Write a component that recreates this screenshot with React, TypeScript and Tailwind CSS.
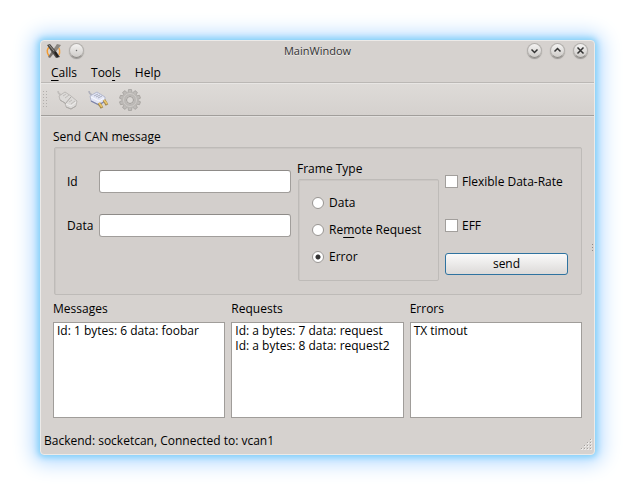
import { useState, type ReactNode } from "react";

const GROUP = "rounded-[2px] border border-[#bebbb8] bg-[#d3cfcc] shadow-[inset_1px_1px_0_#cac6c3]";

function Mnemonic({ children }: { children: ReactNode }) {
  return <span className="underline decoration-1 underline-offset-[3px]">{children}</span>;
}

function TitleButton({ label, children }: { label: string; children: ReactNode }) {
  return (
    <button
      type="button"
      aria-label={label}
      className="flex size-[15px] items-center justify-center rounded-full border border-[#b2afac] border-b-[#8b8885] bg-linear-to-b from-[#f4f3f2] to-[#cfccc9] shadow-[0_1px_1px_#989592]"
    >
      <svg viewBox="0 0 13 13" className="size-[13px] shrink-0" fill="none" stroke="#333" strokeWidth="1.5">
        {children}
      </svg>
    </button>
  );
}

function AppIcon() {
  return (
    <svg viewBox="0 0 16 16" className="size-4" fill="none">
      <path d="M4 4C1 5 0 9 3 13" stroke="#f59a2c" strokeWidth="1.5" />
      <path d="M12 4c2 2 2 5 1 8" stroke="#f3a649" strokeWidth="1.5" />
      <path d="M2 14 6 8l3 1-5 6z" fill="#77716b" />
      <path d="M7 7 11 1l4 1L9 10z" fill="#8b8780" />
      <path d="M1 2 4 1l5 6 5 7-4 1-5-7z" fill="#4c4945" />
      <path d="m3 2 5 6" stroke="#9b9791" />
      <path d="m9 9 3 5" stroke="#24211f" strokeWidth="2" />
    </svg>
  );
}

function DisconnectIcon() {
  return (
    <svg viewBox="0 0 22 22" className="size-[22px]" fill="none" strokeLinejoin="round">
      <path d="M1 2c0 2 1 3 3 4" stroke="#c0bdba" strokeWidth="1.5" />
      <path d="m2 7 6-4 6 4 6 5-1 5-5 3-5-2-1-4-5-3z" fill="#dcdad8" stroke="#bbb8b5" />
      <path d="m8 15 6-7" stroke="#aaa7a4" />
      <path d="m3 11 5 3m1 4 5 2 5-3" stroke="#aeaba8" />
      <path d="m9 15 5 2 5-4" stroke="#eeedec" />
      <path d="m6 7 3-2m-1 4 4-3m0 7 3-2m-1 4 4-3" stroke="#bfbcb9" />
    </svg>
  );
}

function ConnectIcon() {
  return (
    <svg viewBox="0 0 22 22" className="size-[22px]" fill="none" strokeLinejoin="round">
      <path d="M1 2c0 2 1 3 3 4" stroke="#b0b1bb" strokeWidth="1.5" />
      <path d="m2 7 7-4 8 5v4l-6 4-8-4z" fill="#e2e5f5" stroke="#b4b8cc" />
      <path d="m3 12 8 4 6-4" stroke="#7c82a8" strokeWidth="1.3" />
      <path d="m3 8 8 4 5-3" stroke="#fafbff" />
      <path d="m6 7 4-2m-2 3 4-2m-2 3 4-2" stroke="#a9adbd" />
      <path d="m11 14 3 5m2-8 3 5" stroke="#a08446" strokeWidth="3" />
      <path d="m11 14 3 4m2-7 3 4" stroke="#e8c46a" strokeWidth="1.8" />
    </svg>
  );
}

const TEETH = [0, 36, 72, 108, 144, 180, 216, 252, 288, 324];

function GearIcon() {
  return (
    <svg viewBox="0 0 22 22" className="size-[22px]" fill="none">
      {TEETH.map((a) => (
        <path key={a} d="m9 4 .5-3.500h3l.5 3.500z" fill="#bebbb8" stroke="#a5a29f" strokeWidth=".8" transform={`rotate(${a} 11 11)`} />
      ))}
      <circle cx="11" cy="11" r="6" stroke="#bbb8b5" strokeWidth="4" />
      <circle cx="11" cy="11" r="6.5" stroke="#cecbc8" />
      <circle cx="11" cy="11" r="3.500" fill="#dad7d4" stroke="#9f9c99" />
    </svg>
  );
}

function ToolButton({ label, children }: { label: string; children: ReactNode }) {
  return (
    <button type="button" aria-label={label} className="flex size-[22px] items-center justify-center">
      {children}
    </button>
  );
}

function TextField({ id, label }: { id: string; label: string }) {
  return (
    <div className="flex h-[23px] items-center">
      <label htmlFor={id} className="w-8 shrink-0">
        {label}
      </label>
      <input
        id={id}
        type="text"
        className="h-[23px] w-full min-w-0 rounded-[3px] border border-[#a19e9b] border-t-[#8e8b88] bg-white px-1 outline-none"
      />
    </div>
  );
}

function CheckField({ id, label }: { id: string; label: string }) {
  return (
    <div className="flex h-[23px] items-center gap-1">
      <input
        id={id}
        type="checkbox"
        className="size-[13px] shrink-0 appearance-none border border-[#a29f9c] bg-white checked:bg-[#444]"
      />
      <label htmlFor={id} className="whitespace-nowrap">
        {label}
      </label>
    </div>
  );
}

function LogList({ title, items }: { title: string; items: string[] }) {
  return (
    <section className="min-w-0">
      <h2>{title}</h2>
      <ul className="mt-[5px] h-24 overflow-hidden border border-[#a09d9a] bg-white px-[3px] leading-[15px] whitespace-nowrap">
        {items.map((item) => (
          <li key={item}>{item}</li>
        ))}
      </ul>
    </section>
  );
}

const FRAME_TYPES: { id: string; label: ReactNode }[] = [
  { id: "data", label: "Data" },
  { id: "remote", label: <>Re<Mnemonic>m</Mnemonic>ote Request</> },
  { id: "error", label: "Error" },
];

const GRIP = [
  [10, 1], [7, 4], [10, 4], [4, 7], [7, 7], [10, 7], [1, 10], [4, 10], [7, 10], [10, 10],
];

export default function App() {
  const [frame, setFrame] = useState("error");
  return (
    <div className="bg-white p-10 font-['Open_Sans','Noto_Sans',sans-serif] text-[12px] leading-4 text-black">
      <main className="relative rounded-[4px] border border-[#eceae8] bg-[#d6d2cf] shadow-[0_0_6px_2px_#7fd0f8,0_1px_20px_7px_#b4d9ff]">
        <header className="grid h-[22px] grid-cols-[1fr_auto_1fr] items-start px-[5px] pt-[2px]">
          <div className="flex gap-[7px]">
            <AppIcon />
            <TitleButton label="On all desktops">
              <circle cx="6.5" cy="6.5" r=".3" strokeWidth=".8" />
            </TitleButton>
          </div>
          <h1 className="text-[11px] text-[#333] [text-shadow:0_1px_0_#eeecea]">MainWindow</h1>
          <div className="flex justify-end gap-2 pr-px">
            <TitleButton label="Minimize">
              <path d="m3.500 5.500 3 3 3-3" />
            </TitleButton>
            <TitleButton label="Maximize">
              <path d="m3.500 7.500 3-3 3 3" />
            </TitleButton>
            <TitleButton label="Close">
              <path d="m3.500 3.500 6 6m0-6-6 6" />
            </TitleButton>
          </div>
        </header>

        <nav className="flex h-[19px] gap-[14px] px-[10px]">
          <button type="button"><Mnemonic>C</Mnemonic>alls</button>
          <button type="button">Too<Mnemonic>l</Mnemonic>s</button>
          <button type="button">Help</button>
        </nav>

        <div className="flex h-[34px] items-center gap-[9px] border-y border-t-[#bbb8b5] border-b-[#a19e9b] bg-linear-to-b from-[#dedbd8] to-[#d5d1ce] px-[2px] pt-[2px] shadow-[inset_0_1px_0_#e8e6e4,0_1px_0_#e2e0de]">
          <svg viewBox="0 0 5 18" className="h-[18px] w-[5px]" fill="#b2afac">
            {[0, 3, 6, 9, 12, 15].map((y) => (
              <path key={y} d={`M0 ${y}h1v1H0zM3 ${y}h1v1H3z`} />
            ))}
          </svg>
          <ToolButton label="Disconnect"><DisconnectIcon /></ToolButton>
          <ToolButton label="Connect"><ConnectIcon /></ToolButton>
          <ToolButton label="Configure"><GearIcon /></ToolButton>
        </div>

        <div className="px-3 pt-[13px]">
          <h2>Send CAN message</h2>
          <form
            className={`mt-[2px] ml-px flex items-start gap-[6px] pr-[13px] pb-[13px] pl-3 ${GROUP}`}
            onSubmit={(e) => e.preventDefault()}
          >
            <div className="flex min-w-0 flex-1 flex-col gap-[21px] pt-[22px]">
              <TextField id="can-id" label="Id" />
              <TextField id="can-data" label="Data" />
            </div>

            <div className="w-[142px] shrink-0 pt-[13px]" role="radiogroup" aria-labelledby="frame-type">
              <div id="frame-type">Frame Type</div>
              <div className={`mt-[2px] ml-px flex h-[102px] flex-col gap-[11px] px-[13px] pt-[15px] ${GROUP}`}>
                {FRAME_TYPES.map((type) => (
                  <div key={type.id} className="flex h-4 items-center gap-[5px]">
                    <input
                      id={type.id}
                      type="radio"
                      name="frame"
                      checked={frame === type.id}
                      onChange={() => setFrame(type.id)}
                      className="size-3 shrink-0 appearance-none rounded-full border border-[#989592] bg-white checked:bg-[radial-gradient(circle,#333_0_2px,#fff_3px)]"
                    />
                    <label htmlFor={type.id} className="whitespace-nowrap">{type.label}</label>
                  </div>
                ))}
              </div>
            </div>

            <div className="w-[123px] shrink-0 pt-[22px]">
              <div className="flex flex-col gap-[21px]">
                <CheckField id="fd" label="Flexible Data-Rate" />
                <CheckField id="eff" label="EFF" />
              </div>
              <button
                type="submit"
                className="mt-4 h-[22px] w-full rounded-[3px] border border-[#2f73a0] bg-linear-to-b from-[#fafafa] to-[#dcdad8] leading-4"
              >
                send
              </button>
            </div>
          </form>

          <div className="mt-[6px] grid grid-cols-3 gap-[6px]">
            <LogList title="Messages" items={["Id: 1 bytes: 6 data: foobar"]} />
            <LogList title="Requests" items={["Id: a bytes: 7 data: request", "Id: a bytes: 8 data: request2"]} />
            <LogList title="Errors" items={["TX timout"]} />
          </div>
        </div>

        <footer className="mt-[15px] h-[21px] px-[3px]">Backend: socketcan, Connected to: vcan1</footer>

        <svg viewBox="0 0 12 12" className="absolute right-[2px] bottom-[4px] size-3">
          {GRIP.map(([x, y]) => (
            <g key={`${x}-${y}`}>
              <path d={`M${x} ${y}h2v2h-2z`} fill="#eceae8" />
              <path d={`M${x} ${y}h1v1h-1z`} fill="#a5a29f" />
            </g>
          ))}
        </svg>
        <svg viewBox="0 0 2 8" className="absolute top-1/2 right-0 h-2 w-[2px] -translate-y-1/2" fill="#8f8c89">
          <path d="M0 0h1v1H0zM0 3h1v1H0zM0 6h1v1H0z" />
        </svg>
      </main>
    </div>
  );
}
